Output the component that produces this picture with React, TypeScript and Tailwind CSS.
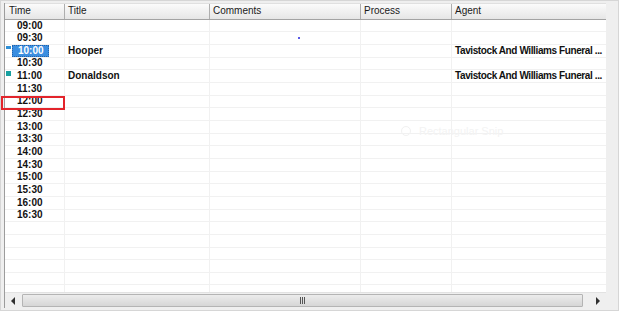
import React from 'react';

type Row = {
  time?: string;
  title?: string;
  agent?: string;
  selected?: boolean;
  marker?: 'blue' | 'teal';
};

const times = [
  '09:00', '09:30', '10:00', '10:30', '11:00', '11:30', '12:00', '12:30',
  '13:00', '13:30', '14:00', '14:30', '15:00', '15:30', '16:00', '16:30',
];

const rows: Row[] = [
  ...times.map((t) => ({ time: t } as Row)),
  {}, {}, {}, {}, {}, {}, {},
];
rows[2] = { time: '10:00', title: 'Hooper', agent: 'Tavistock And Williams Funeral ...', selected: true, marker: 'blue' };
rows[4] = { time: '11:00', title: 'Donaldson', agent: 'Tavistock And Williams Funeral ...', marker: 'teal' };

const cols = [
  { label: 'Time', w: 'w-[60px]', pl: 'pl-[4px]' },
  { label: 'Title', w: 'w-[145px]', pl: 'pl-[3px]' },
  { label: 'Comments', w: 'w-[151px]', pl: 'pl-[3px]' },
  { label: 'Process', w: 'w-[91px]', pl: 'pl-[3px]' },
  { label: 'Agent', w: 'w-[153px]', pl: 'pl-[3px]' },
];

function Triangle({ dir }: { dir: 'left' | 'right' }) {
  return (
    <svg width="5" height="8" viewBox="0 0 5 8">
      {dir === 'left' ? <path d="M4 0 L0 4 L4 8 Z" fill="#303030" /> : <path d="M1 0 L5 4 L1 8 Z" fill="#303030" />}
    </svg>
  );
}

export default function App() {
  return (
    <div className="w-[622px] h-[313px] bg-white font-['Liberation_Sans',Arial,sans-serif] text-[10px] text-[#111] overflow-hidden">
      <div className="relative w-[619px] h-[311px] bg-[#efefef] border border-[#d6d6d6] flex flex-col pt-[2px] pl-[3px] pr-[12px] pb-[2px]">
        <div className="flex-1 flex flex-col bg-white border-l border-[#9c9c9c] overflow-hidden">
          {/* header */}
          <div className="flex h-[16.7px] shrink-0 bg-gradient-to-b from-[#fbfbfb] to-[#e6e6e6] border-b border-[#a3a3a3] border-t border-t-[#e0e0e0]">
            {cols.map((c, i) => (
              <div
                key={c.label}
                className={`${c.w} ${c.pl} shrink-0 flex items-center leading-none text-[#1a1a1a] ${i < cols.length - 1 ? 'border-r border-[#aeaeae]' : ''}`}
              >
                {c.label}
              </div>
            ))}
          </div>

          {/* rows */}
          <div className="flex-1 overflow-hidden">
            {rows.map((r, idx) => (
              <div key={idx} className="relative flex h-[12.67px] border-b border-[#f1f1f1] font-bold leading-none">
                <div className="w-[60px] shrink-0 border-r border-[#f1f1f1] flex items-center pl-[7px] relative">
                  {r.time && (
                    <span
                      className={`pl-[5px] pr-[4px] h-[12px] flex items-center ${
                        r.selected ? 'bg-[#3b8ee0] text-white border border-dotted border-[#2462a8] pl-[4px] pr-[3px]' : ''
                      }`}
                    >
                      {r.time}
                    </span>
                  )}
                  {r.marker === 'blue' && <div className="absolute left-[1px] top-[1px] w-[5px] h-[3px] bg-[#2e8fd6]" />}
                  {r.marker === 'teal' && <div className="absolute left-[1px] top-[1px] w-[5px] h-[5px] bg-[#17a0a0]" />}
                </div>
                <div className="w-[145px] shrink-0 border-r border-[#f1f1f1] flex items-center pl-[3px]">{r.title}</div>
                <div className="w-[151px] shrink-0 border-r border-[#f1f1f1]" />
                <div className="w-[91px] shrink-0 border-r border-[#f1f1f1]" />
                <div className="w-[153px] shrink-0 flex items-center pl-[3px] whitespace-nowrap tracking-[-0.4px]">{r.agent}</div>
              </div>
            ))}
          </div>

          {/* horizontal scrollbar */}
          <div className="h-[16px] shrink-0 flex bg-[#efefef] border-t border-[#e2e2e2]">
            <div className="w-[17px] flex items-center justify-center">
              <Triangle dir="left" />
            </div>
            <div className="flex-1 my-[1px] flex items-center justify-center bg-gradient-to-b from-[#ececec] to-[#d6d6d6] border border-[#b4b4b4] rounded-[1px]">
              <div className="flex gap-[1px]">
                <div className="w-[1px] h-[7px] bg-[#555]" />
                <div className="w-[1px] h-[7px] bg-[#555]" />
                <div className="w-[1px] h-[7px] bg-[#555]" />
              </div>
            </div>
            <div className="w-[23px] flex items-center justify-center pl-[6px]">
              <Triangle dir="right" />
            </div>
          </div>
        </div>

        {/* red highlight around 12:00 */}
        <div className="absolute left-[0px] top-[95px] w-[64px] h-[14px] border-2 border-[#e3242b]" />

        {/* stray dot */}
        <div className="absolute left-[297px] top-[36px] w-[2px] h-[2px] bg-[#5a5ae6]" />

        {/* faint watermark */}
        <div className="absolute left-[398px] top-[122px] flex items-center gap-[8px] px-[2px] text-[11px] text-[#f3f3f3]">
          <span className="w-[10px] h-[10px] border border-[#f1f1f1] rounded-full" />
          <span>Rectangular Snip</span>
        </div>
      </div>
    </div>
  );
}
